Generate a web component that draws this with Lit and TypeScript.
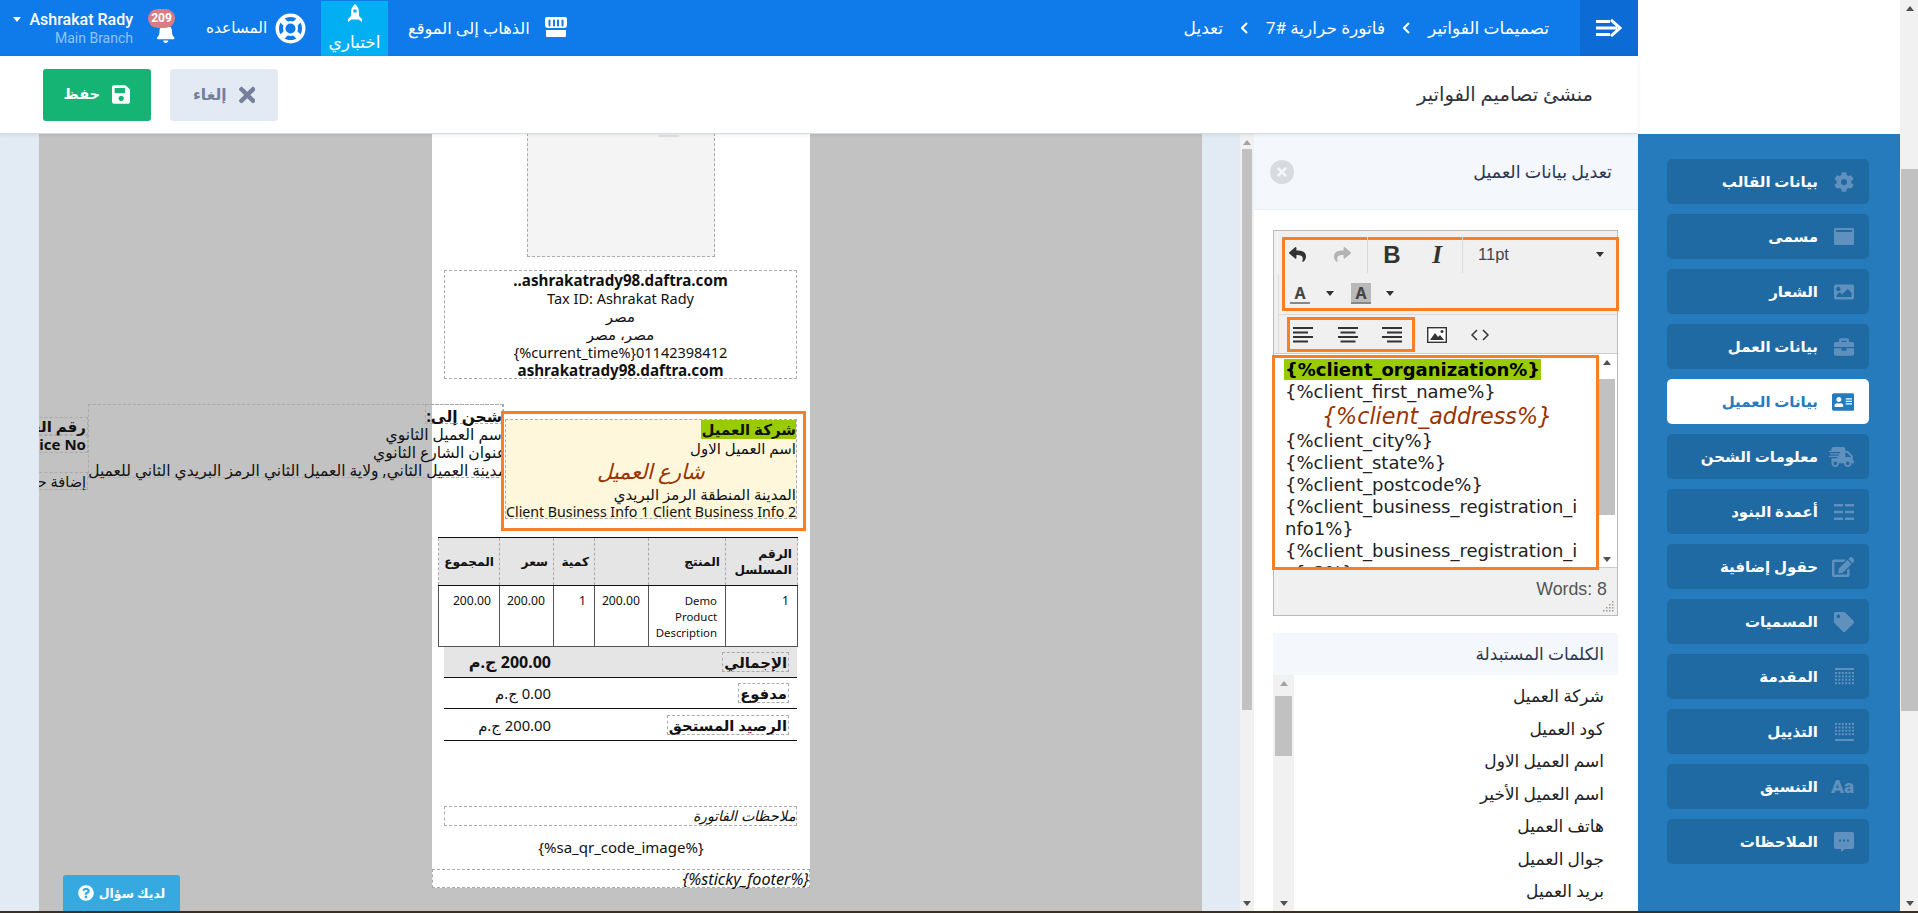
import { LitElement, css, html, svg } from 'lit';
import { customElement } from 'lit/decorators.js';

const FA = {
  cog: ['0 0 512 512', 'M487.4 315.7l-42.6-24.6c4.3-23.2 4.3-47 0-70.2l42.6-24.6c4.9-2.8 7.1-8.6 5.5-14-11.1-35.6-30-67.8-54.7-94.6-3.8-4.1-10-5.1-14.8-2.3L380.8 110c-17.9-15.4-38.5-27.3-60.8-35.1V25.8c0-5.6-3.9-10.5-9.4-11.7-36.7-8.2-74.3-7.8-109.2 0-5.5 1.2-9.4 6.1-9.4 11.7V75c-22.2 7.9-42.8 19.8-60.8 35.1L88.7 85.5c-4.9-2.8-11-1.9-14.8 2.3-24.7 26.7-43.6 58.9-54.7 94.6-1.7 5.4.6 11.2 5.5 14L67.3 221c-4.3 23.2-4.3 47 0 70.2l-42.6 24.6c-4.9 2.8-7.1 8.6-5.5 14 11.1 35.6 30 67.8 54.7 94.6 3.8 4.1 10 5.1 14.8 2.3l42.6-24.6c17.9 15.4 38.5 27.3 60.8 35.1v49.2c0 5.6 3.9 10.5 9.4 11.7 36.7 8.2 74.3 7.8 109.2 0 5.5-1.2 9.4-6.1 9.4-11.7v-49.2c22.2-7.9 42.8-19.8 60.8-35.1l42.6 24.6c4.9 2.8 11 1.9 14.8-2.3 24.7-26.7 43.6-58.9 54.7-94.6 1.5-5.5-.7-11.3-5.6-14.1zM256 336c-44.1 0-80-35.9-80-80s35.9-80 80-80 80 35.9 80 80-35.9 80-80 80z'],
  win: ['0 0 20 17', 'M1.5 0h17A1.5 1.5 0 0 1 20 1.500v14a1.500 1.500 0 0 1-1.500 1.500h-17A1.500 1.500 0 0 1 0 15.500v-14A1.500 1.500 0 0 1 1.500 0zM2 2v2h16V2z'],
  image: ['0 0 512 512', 'M464 448H48c-26.51 0-48-21.49-48-48V112c0-26.51 21.49-48 48-48h416c26.51 0 48 21.49 48 48v288c0 26.51-21.49 48-48 48zM112 120c-30.928 0-56 25.072-56 56s25.072 56 56 56 56-25.072 56-56-25.072-56-56-56zM64 384h384V272l-87.515-87.515c-4.686-4.686-12.284-4.686-16.971 0L208 320l-55.515-55.515c-4.686-4.686-12.284-4.686-16.971 0L64 336v48z'],
  case: ['0 0 512 512', 'M320 336c0 8.84-7.16 16-16 16h-96c-8.84 0-16-7.16-16-16v-48H0v144c0 25.6 22.4 48 48 48h416c25.6 0 48-22.4 48-48V288H320v48zm144-208h-80V80c0-25.6-22.4-48-48-48H176c-25.6 0-48 22.4-48 48v48H48c-25.6 0-48 22.4-48 48v80h512v-80c0-25.6-22.4-48-48-48zm-144 0H192V96h128v32z'],
  card: ['0 0 576 512', 'M528 32H48C21.5 32 0 53.5 0 80v352c0 26.5 21.5 48 48 48h480c26.5 0 48-21.5 48-48V80c0-26.5-21.5-48-48-48zm-352 96c35.3 0 64 28.7 64 64s-28.7 64-64 64-64-28.7-64-64 28.7-64 64-64zm112 236.8c0 10.6-10 19.2-22.4 19.2H86.4C74 384 64 375.4 64 364.8v-19.2c0-31.8 30.1-57.6 67.2-57.6h5c12.3 5.1 25.7 8 39.8 8s27.6-2.9 39.8-8h5c37.1 0 67.2 25.8 67.2 57.6v19.2zM512 312c0 4.4-3.6 8-8 8H360c-4.4 0-8-3.6-8-8v-16c0-4.4 3.6-8 8-8h144c4.4 0 8 3.6 8 8v16zm0-64c0 4.4-3.6 8-8 8H360c-4.400 0-8-3.600-8-8v-16c0-4.400 3.600-8 8-8h144c4.400 0 8 3.600 8 8v16zm0-64c0 4.400-3.600 8-8 8H360c-4.400 0-8-3.600-8-8v-16c0-4.400 3.600-8 8-8h144c4.400 0 8 3.600 8 8v16z'],
  truck: ['0 0 640 512', 'M624 352h-16V243.900c0-12.700-5.100-24.900-14.100-33.900L494 110.100c-9-9-21.200-14.100-33.900-14.100H416V48c0-26.500-21.500-48-48-48H112C85.500 0 64 21.500 64 48v48H8c-4.400 0-8 3.600-8 8v16c0 4.400 3.600 8 8 8h272c4.400 0 8 3.600 8 8v16c0 4.400-3.600 8-8 8H40c-4.400 0-8 3.600-8 8v16c0 4.400 3.600 8 8 8h208c4.400 0 8 3.600 8 8v16c0 4.400-3.600 8-8 8H8c-4.400 0-8 3.600-8 8v16c0 4.400 3.600 8 8 8h208c4.400 0 8 3.600 8 8v16c0 4.400-3.600 8-8 8H64v128c0 53 43 96 96 96s96-43 96-96h128c0 53 43 96 96 96s96-43 96-96h48c8.800 0 16-7.200 16-16v-32c0-8.800-7.200-16-16-16zM160 464c-26.500 0-48-21.500-48-48s21.500-48 48-48 48 21.500 48 48-21.500 48-48 48zm320 0c-26.500 0-48-21.500-48-48s21.500-48 48-48 48 21.500 48 48-21.500 48-48 48zm80-208H416V144h44.100l99.900 99.900V256z'],
  cols: ['0 0 20 16', 'M0 0h9v2.500H0zM11 0h9v2.500h-9zM0 6.700h9v2.500H0zM11 6.700h9v2.500h-9zM0 13.500h9V16H0zM11 13.500h9V16h-9z'],
  edit: ['0 0 576 512', 'M402.600 83.200l90.200 90.200c3.800 3.800 3.800 10 0 13.800L274.400 405.600l-92.800 10.300c-12.400 1.400-22.900-9.100-21.500-21.500l10.300-92.800L388.800 83.200c3.800-3.800 10-3.800 13.800 0zm162-22.900l-48.800-48.800c-15.200-15.200-39.900-15.200-55.200 0l-35.400 35.400c-3.800 3.800-3.800 10 0 13.800l90.200 90.200c3.800 3.800 10 3.800 13.800 0l35.400-35.400c15.200-15.300 15.200-40 0-55.200zM384 346.200V448H64V128h229.800c3.200 0 6.200-1.300 8.500-3.500l40-40c7.600-7.600 2.200-20.500-8.500-20.500H48C21.500 64 0 85.500 0 112v352c0 26.500 21.500 48 48 48h352c26.500 0 48-21.500 48-48V306.200c0-10.700-12.900-16-20.500-8.500l-40 40c-2.200 2.300-3.500 5.300-3.500 8.500z'],
  tag: ['0 0 512 512', 'M0 252.118V48C0 21.490 21.490 0 48 0h204.118a48 48 0 0 1 33.941 14.059l211.882 211.882c18.745 18.745 18.745 49.137 0 67.882L293.823 497.941c-18.745 18.745-49.137 18.745-67.882 0L14.059 286.059A48 48 0 0 1 0 252.118zM112 64c-26.510 0-48 21.490-48 48s21.490 48 48 48 48-21.490 48-48-21.490-48-48-48z'],
  comment: ['0 0 20 20', 'M2 0h16a2 2 0 0 1 2 2v13a2 2 0 0 1-2 2h-7l-4 3v-3H2a2 2 0 0 1-2-2V2a2 2 0 0 1 2-2zM5 7.500v2h2v-2zM9 7.500v2h2v-2zM13 7.500v2h2v-2z'],
  save: ['0 0 448 512', 'M433.941 129.941l-83.882-83.882A48 48 0 0 0 316.118 32H48C21.490 32 0 53.490 0 80v352c0 26.510 21.490 48 48 48h352c26.510 0 48-21.490 48-48V163.882a48 48 0 0 0-14.059-33.941zM224 416c-35.346 0-64-28.654-64-64 0-35.346 28.654-64 64-64s64 28.654 64 64c0 35.346-28.654 64-64 64zm96-304.520V212c0 6.627-5.373 12-12 12H76c-6.627 0-12-5.373-12-12V108c0-6.627 5.373-12 12-12h228.520c3.183 0 6.235 1.264 8.485 3.515l3.480 3.480A11.996 11.996 0 0 1 320 111.480z'],
  times: ['0 0 352 512', 'M242.720 256l100.070-100.070c12.280-12.280 12.280-32.190 0-44.480l-22.240-22.240c-12.280-12.280-32.190-12.280-44.480 0L176 189.280 75.930 89.210c-12.280-12.280-32.190-12.280-44.480 0L9.210 111.450c-12.280 12.280-12.280 32.190 0 44.480L109.280 256 9.210 356.070c-12.280 12.280-12.280 32.190 0 44.480l22.240 22.240c12.280 12.280 32.200 12.280 44.480 0L176 322.720l100.070 100.070c12.280 12.280 32.200 12.280 44.480 0l22.240-22.240c12.280-12.280 12.280-32.190 0-44.480L242.720 256z'],
  bell: ['0 0 448 512', 'M224 512c35.320 0 63.970-28.650 63.970-64H160.030c0 35.350 28.650 64 63.970 64zm215.390-149.710c-19.320-20.760-55.470-51.990-55.470-154.290 0-77.700-54.480-139.900-127.940-155.160V32c0-17.670-14.320-32-31.980-32s-31.980 14.330-31.980 32v20.840C118.560 68.100 64.080 130.300 64.080 208c0 102.300-36.150 133.530-55.470 154.290-6 6.450-8.660 14.160-8.610 21.710.11 16.400 12.980 32 32.100 32h383.800c19.120 0 32-15.600 32.100-32 .05-7.550-2.610-15.270-8.610-21.710z'],
  help: ['0 0 512 512', 'M504 256c0 136.997-111.043 248-248 248S8 392.997 8 256C8 119.083 119.043 8 256 8s248 111.083 248 248zM262.655 90c-54.497 0-89.255 22.957-116.549 63.758-3.536 5.286-2.353 12.415 2.715 16.258l34.699 26.310c5.205 3.947 12.621 3.008 16.665-2.122 17.864-22.658 30.113-35.797 57.303-35.797 20.429 0 45.698 13.148 45.698 32.958 0 14.976-12.363 22.667-32.534 33.976C247.128 238.528 216 254.941 216 296v4c0 6.627 5.373 12 12 12h56c6.627 0 12-5.373 12-12v-1.333c0-28.462 83.186-29.647 83.186-106.667 0-58.002-60.165-102-116.531-102zM256 338c-25.365 0-46 20.635-46 46 0 25.364 20.635 46 46 46s46-20.636 46-46c0-25.365-20.635-46-46-46z'],
  undo: ['0 0 512 512', 'M8.309 189.836L184.313 37.851C199.719 24.546 224 35.347 224 56.015v80.053c160.629 1.839 288 34.032 288 186.258 0 61.441-39.581 122.309-83.333 154.132-13.653 9.931-33.111-2.533-28.077-18.631 45.344-145.012-21.507-183.510-176.590-185.742V360c0 20.700-24.300 31.453-39.687 18.164l-176.004-152c-11.071-9.562-11.086-26.753 0-36.328z'],
  rocket: ['0 0 14 19', 'M7 0c2.600 2 4 5 4 8.500V12l3 3v3l-3.500-2.500h-7L0 18v-3l3-3V8.500C3 5 4.400 2 7 0zm0 5.200a1.800 1.800 0 1 0 0 3.600 1.800 1.800 0 0 0 0-3.600z'],
} as const;

type IconName = keyof typeof FA;

const icon = (name: IconName, h: number, cls = '') =>
  html`<svg class=${cls} height=${h} viewBox=${FA[name][0]} fill="currentColor"><path fill-rule="evenodd" d=${FA[name][1]}></path></svg>`;

// dotted grid used by the header / footer entries of the side menu
const dotGrid = (solidTop: boolean) => {
  const dots = [];
  for (let r = 0; r < 4; r++) {
    for (let c = 0; c < 6; c++) {
      dots.push(svg`<rect x=${c * 3.4} y=${(solidTop ? 4 : 0) + r * 3.400} width="2" height="2"></rect>`);
    }
  }
  return html`<svg height="18" viewBox="0 0 19 18" fill="currentColor">
    ${dots}<rect x="0" y=${solidTop ? 0 : 16} width="19" height="2"></rect>
  </svg>`;
};

const MENU: { label: string; ico: () => unknown; active?: boolean }[] = [
  { label: 'بيانات القالب', ico: () => icon('cog', 20) },
  { label: 'مسمى', ico: () => icon('win', 17) },
  { label: 'الشعار', ico: () => icon('image', 20) },
  { label: 'بيانات العمل', ico: () => icon('case', 20) },
  { label: 'بيانات العميل', ico: () => icon('card', 20), active: true },
  { label: 'معلومات الشحن', ico: () => icon('truck', 20) },
  { label: 'أعمدة البنود', ico: () => icon('cols', 16) },
  { label: 'حقول إضافية', ico: () => icon('edit', 20) },
  { label: 'المسميات', ico: () => icon('tag', 20) },
  { label: 'المقدمة', ico: () => dotGrid(true) },
  { label: 'التذييل', ico: () => dotGrid(false) },
  { label: 'التنسيق', ico: () => html`<span class="aa">Aa</span>` },
  { label: 'الملاحظات', ico: () => icon('comment', 20) },
];

const VARS = ['شركة العميل', 'كود العميل', 'اسم العميل الاول', 'اسم العميل الأخير', 'هاتف العميل', 'جوال العميل', 'بريد العميل', 'مدينة العميل'];

const scrollbar = (cls: string, top: number, thumb: number) => html`
  <div class="sb ${cls}">
    <i class="arr up"></i>
    <div style="height:${top}px"></div>
    <div class="thumb" style="height:${thumb}px"></div>
    <div class="grow"></div>
    <i class="arr down"></i>
  </div>
`;

const alignIcon = (kind: 'l' | 'c' | 'r') => {
  const x = kind === 'l' ? 0 : kind === 'c' ? 2.5 : 5;
  return html`<svg width="20" height="18" viewBox="0 0 20 18" fill="#333">
    <rect y="1" width="20" height="2"></rect>
    <rect x=${x} y="5.500" width="15" height="2"></rect>
    <rect y="10" width="20" height="2"></rect>
    <rect x=${x} y="14.500" width="15" height="2"></rect>
  </svg>`;
};

@customElement('app-root')
export class AppRoot extends LitElement {
  static styles = css`
    :host {
      display: grid;
      grid-template-columns: 1638px 262px 18px;
      width: 1918px;
      height: 913px;
      box-sizing: border-box;
      border-bottom: 2px solid #3a2f25;
      overflow: hidden;
      font-family: 'Roboto', 'Noto Sans', 'DejaVu Sans', sans-serif;
      background: #fff;
      color: #333;
    }
    * {
      box-sizing: border-box;
    }
    .main {
      display: flex;
      flex-direction: column;
      min-width: 0;
      height: 911px;
    }

    /* top bar */
    .topbar {
      height: 56px;
      flex: none;
      display: flex;
      align-items: stretch;
      background: #0f7aea;
      color: #fff;
      box-shadow: 0 0 18px rgba(0, 0, 0, 0.05);
    }
    .user {
      width: 120px;
      margin-left: 13px;
      display: flex;
      flex-direction: column;
      align-items: flex-end;
      position: relative;
      padding-top: 10px;
      white-space: nowrap;
    }
    .user b {
      font-size: 16px;
      font-weight: 500;
      line-height: 19px;
    }
    .user small {
      font-size: 14px;
      line-height: 19px;
      color: #93c3f8;
    }
    .user::before {
      content: '';
      position: absolute;
      left: 0;
      top: 17px;
      border: 4.5px solid transparent;
      border-top: 5px solid #fff;
    }
    .bell {
      position: relative;
      margin-left: 24px;
      margin-top: 23px;
      width: 23px;
      height: 20px;
    }
    .badge {
      position: absolute;
      left: -9px;
      top: -14px;
      width: 27px;
      height: 19px;
      border-radius: 10px;
      background: #d97c83;
      font-size: 12px;
      font-weight: 700;
      text-align: center;
      line-height: 19px;
    }
    .help {
      margin-left: 26px;
      display: flex;
      align-items: center;
      gap: 8px;
      width: 101px;
      font-size: 15.300px;
      white-space: nowrap;
    }
    .ring {
      flex: none;
    }
    .tab {
      margin-left: 14px;
      margin-top: 1px;
      width: 67px;
      background: #02aff2;
      display: flex;
      flex-direction: column;
      align-items: center;
      padding-top: 3px;
      font-size: 17px;
      white-space: nowrap;
    }
    .tab span {
      margin-top: 7px;
      line-height: 24px;
    }
    .site {
      margin-left: 20px;
      display: flex;
      align-items: center;
      gap: 15px;
      width: 159px;
      font-size: 16.300px;
      white-space: nowrap;
    }
    .site svg {
      margin-top: -2px;
      flex: none;
    }
    .crumbs {
      margin-left: auto;
      margin-right: 31px;
      display: flex;
      align-items: center;
      gap: 18px;
      font-size: 17px;
      white-space: nowrap;
    }
    .toggle {
      width: 58px;
      background: #0d6bd5;
      display: flex;
      align-items: center;
      justify-content: center;
    }

    /* title row */
    .titlebar {
      height: 78px;
      flex: none;
      display: flex;
      align-items: center;
      padding: 0 45px 0 43px;
      gap: 19px;
      background: #fff;
      border-bottom: 1px solid #d3dae2;
      box-shadow: 0 1px 4px rgba(0, 0, 0, 0.08);
      position: relative;
      z-index: 5;
    }
    .btn {
      width: 108px;
      height: 52px;
      border-radius: 3px;
      display: flex;
      align-items: center;
      justify-content: center;
      gap: 12px;
      font-size: 14.500px;
      font-weight: 700;
    }
    .btn.save {
      background: #15b374;
      color: #fff;
    }
    .btn.cancel {
      background: #e4eaf3;
      color: #75809a;
      font-size: 15.500px;
    }
    .titlebar h1 {
      margin: 0 0 0 auto;
      font-size: 19.500px;
      font-weight: 400;
      color: #2f3440;
    }

    /* workspace */
    .work {
      flex: 1;
      min-height: 0;
      display: grid;
      grid-template-columns: 39px 1163px 38px 14px 384px;
    }
    .gutter {
      background: #e2eaf3;
    }
    .canvas {
      background: #c2c2c2;
      position: relative;
      overflow: hidden;
      padding-left: 393px;
    }
    .ask {
      position: absolute;
      left: 24px;
      bottom: 0;
      width: 117px;
      height: 36px;
      background: #36a9e1;
      border-radius: 3px 3px 0 0;
      color: #fff;
      font-size: 12.500px;
      font-weight: 700;
      display: flex;
      align-items: center;
      justify-content: center;
      gap: 5px;
    }

    /* invoice sheet */
    .paper {
      width: 378px;
      height: 754px;
      background: #fff;
      display: flex;
      flex-direction: column;
      align-items: stretch;
      font-family: 'Noto Sans', 'DejaVu Sans', sans-serif;
      font-size: 15px;
      line-height: 18px;
      color: #111;
    }
    .dash {
      border: 1px dashed #aaa;
    }
    .logo {
      width: 188px;
      height: 124px;
      margin-top: -1px;
      flex: none;
      align-self: center;
      background: #f4f4f4;
      position: relative;
    }
    .logo::after {
      content: '';
      position: absolute;
      right: 35px;
      top: 1px;
      width: 20px;
      height: 2px;
      background: #e2e2e2;
    }
    .biz {
      margin: 13px 13px 0 12px;
      height: 109px;
      text-align: center;
      flex: none;
    }
    .biz div {
      height: 18px;
      white-space: nowrap;
    }
    .biz .lat {
      font-size: 14.500px;
    }
    .biz b {
      font-size: 15.200px;
    }
    .parties {
      position: relative;
      margin-top: 32px;
      height: 120px;
      flex: none;
    }
    .client-mark {
      position: absolute;
      z-index: 2;
      right: 4px;
      top: 0;
      width: 305px;
      height: 120px;
      background: #fff;
      border: 3px solid #f97f27;
      padding: 5px 6px 9px 1px;
    }
    .client {
      height: 100%;
      background: #fef7dc;
      text-align: right;
      direction: rtl;
      overflow: hidden;
      white-space: nowrap;
    }
    .client .org {
      display: inline-block;
      background: #99cc00;
      font-weight: 700;
      height: 19px;
      font-size: 15px;
    }
    .client .addr {
      text-align: center;
      color: #993300;
      font-style: italic;
      font-size: 21px;
      line-height: 28px;
    }
    .client .ln {
      line-height: 18px;
    }
    .client .ln.lat {
      font-size: 14.200px;
      text-align: right;
    }
    .ship {
      position: absolute;
      left: -344px;
      top: -7px;
      width: 416px;
      height: 74px;
      direction: rtl;
      white-space: nowrap;
      padding-top: 2px;
      font-size: 15.500px;
    }
    .ship div {
      margin-right: -3px;
    }
    .ship .lbl {
      position: absolute;
      right: 0;
      top: -1px;
      width: 78px;
      height: 20px;
      margin: 0;
      padding: 2px 0 0 0;
      font-weight: 700;
      border: 1px dashed #aaa;
    }
    .ship .first {
      height: 18px;
    }
    .invno {
      position: absolute;
      right: 722px;
      top: 6px;
      width: 130px;
      direction: rtl;
      font-weight: 700;
      white-space: nowrap;
      font-size: 15px;
    }
    .invno div {
      height: 18px;
      border: 1px dashed #aaa;
      border-left: 0;
      line-height: 16px;
      padding-right: 1px;
    }
    .invno .en {
      direction: ltr;
      text-align: right;
    }
    .invno .add {
      margin-top: 19px;
      font-weight: 400;
      font-size: 14.500px;
    }
    table {
      margin: 6px 13px 0 6px;
      width: 359px;
      flex: none;
      direction: rtl;
      border-collapse: collapse;
      table-layout: fixed;
      font-size: 12.200px;
      line-height: 16px;
    }
    th {
      height: 48px;
      background: #e5e5e5;
      border-top: 1px solid #111;
      border-bottom: 1px solid #111;
      border-left: 1px dashed #aaa;
      border-right: 1px dashed #aaa;
      text-align: right;
      padding: 0 5px;
      font-size: 12.200px;
    }
    td {
      height: 61px;
      vertical-align: top;
      text-align: right;
      border: 1px solid #555;
      border-top: 0;
      padding: 7px 8px 0;
    }
    td.desc {
      font-size: 11.400px;
    }
    .totals {
      margin: 0 13px 0 12px;
      direction: rtl;
      flex: none;
    }
    .row {
      height: 31px;
      display: grid;
      grid-template-columns: 1fr 107px;
      align-items: center;
      padding-right: 8px;
      border-bottom: 1px solid #111;
      font-size: 14.800px;
    }
    .row.last {
      height: 32px;
    }
    .row.sum {
      background: #e5e5e5;
    }
    .row.sum .val {
      font-weight: 700;
      font-size: 16px;
    }
    .row .val {
      font-size: 14.800px;
    }
    .row .lab {
      justify-self: start;
      font-weight: 700;
      line-height: 18px;
      height: 20px;
      padding: 0 1px;
      border: 1px dashed #aaa;
    }
    .notes {
      margin: 65px 13px 0 12px;
      height: 20px;
      flex: none;
      direction: rtl;
      font-style: italic;
      font-size: 14.300px;
    }
    .qr {
      margin-top: 12px;
      height: 20px;
      flex: none;
      text-align: center;
    }
    .sticky {
      margin-top: 11px;
      height: 19px;
      flex: none;
      font-style: italic;
      text-align: right;
      font-size: 16.200px;
      white-space: nowrap;
    }

    /* fake scrollbars */
    .sb {
      display: flex;
      flex-direction: column;
      background: #f1f1f1;
      align-items: center;
    }
    .sb .thumb {
      background: #c1c1c1;
      width: 100%;
    }
    .sb .grow {
      flex: 1;
    }
    .arr {
      display: block;
      flex: none;
      width: 0;
      height: 0;
      border: 4px solid transparent;
    }
    .arr.up {
      border-top: 0;
      border-bottom: 5px solid #a3a3a3;
      margin: 6px 0 4px;
    }
    .arr.down {
      border-bottom: 0;
      border-top: 5px solid #505050;
      margin: 4px 0 5px;
    }
    .sb.panel {
      padding: 0 2px;
    }
    .sb.page .arr.up {
      border-bottom-color: #505050;
    }
    .sb.page {
      padding-left: 1px;
    }
    .sb.inner {
      width: 16px;
      background: #fff;
    }
    .sb.inner .arr.up {
      border-bottom-color: #505050;
    }
    .sb.vs {
      width: 21px;
      flex: none;
      padding: 0 2px;
    }

    /* settings panel */
    .panel-body {
      display: flex;
      flex-direction: column;
      min-height: 0;
      overflow: hidden;
      background: #fff;
    }
    .phead {
      height: 76px;
      flex: none;
      background: #f4f7fb;
      border-bottom: 1px solid #e3ebf3;
      display: flex;
      align-items: center;
      padding: 0 26px 0 16px;
      justify-content: space-between;
      font-size: 17.500px;
      color: #2c3550;
    }
    .close {
      width: 24px;
      height: 24px;
      border-radius: 50%;
      background: #d9dcdf;
      color: #f4f7fb;
      display: flex;
      align-items: center;
      justify-content: center;
    }
    .editor {
      margin: 20px 20px 0 19px;
      height: 386px;
      flex: none;
      border: 1px solid #bbb;
      background: #f0f0f0;
      display: flex;
      flex-direction: column;
      position: relative;
    }
    .toolbar {
      height: 123px;
      flex: none;
      padding-top: 6px;
      border-bottom: 1px solid #ccc;
      position: relative;
    }
    .vline {
      position: absolute;
      left: 4px;
      top: 44px;
      width: 1px;
      height: 40px;
      background: #dcdcdc;
    }
    .mark1 {
      position: relative;
      z-index: 1;
      margin-left: 8px;
      width: 337px;
      height: 74px;
      border: 3px solid #f97f27;
    }
    .tr {
      display: flex;
      align-items: center;
      color: #333;
    }
    .tr.a {
      height: 29px;
    }
    .tr.b {
      height: 39px;
      padding: 9px 0 0 5px;
    }
    .tb {
      width: 24px;
      display: flex;
      justify-content: center;
      flex: none;
    }
    .tb.off {
      color: #b4b4b4;
    }
    .tb.gap {
      margin-left: 21px;
    }
    .tb svg.flip {
      transform: scaleX(-1);
    }
    .sep {
      width: 1px;
      height: 36px;
      background: #d9d9d9;
      margin: 0 12px 0 13px;
      flex: none;
    }
    .bold {
      font: 700 24px/24px 'Liberation Sans', sans-serif;
    }
    .ital {
      font: italic 700 25px/24px 'Liberation Serif', serif;
    }
    .size {
      font: 16.500px 'Liberation Sans', sans-serif;
      margin-left: 3px;
      flex: 1;
      color: #444;
    }
    .caret {
      width: 0;
      height: 0;
      border: 4.500px solid transparent;
      border-bottom: 0;
      border-top: 5px solid #333;
      flex: none;
    }
    .size + .caret {
      margin-right: 12px;
    }
    .c1 {
      margin-left: 16px;
    }
    .c2 {
      margin-left: 15px;
    }
    .fa {
      width: 20px;
      height: 21px;
      text-align: center;
      font: 700 16px/20px 'Noto Sans', sans-serif;
      border-bottom: 2px solid #888;
      flex: none;
      color: #444;
    }
    .fa.bg {
      background: #b9b9b9;
      margin-left: 17px;
    }
    .row3 {
      margin: 3px 0 0 4px;
      height: 40px;
      border-top: 1px solid #d9d9d9;
      border-left: 1px solid #d9d9d9;
      display: flex;
      align-items: flex-start;
      padding-top: 2px;
    }
    .mark2 {
      margin-left: 8px;
      width: 128px;
      height: 35px;
      border: 3px solid #f97f27;
      display: flex;
      align-items: center;
      gap: 24.500px;
      padding-left: 3px;
    }
    .row3 .ex {
      height: 35px;
      display: flex;
      align-items: center;
      margin-left: 12px;
    }
    .row3 .ex + .ex {
      margin-left: 24px;
    }
    .content {
      height: 213px;
      flex: none;
      display: flex;
      background: #fff;
    }
    .mark3 {
      position: relative;
      z-index: 2;
      width: 327px;
      height: 215px;
      margin: 1px 0 -3px -2px;
      border: 3px solid #f97f27;
      padding: 1px 17px 0 10px;
      overflow: hidden;
      font: 18px/22px 'DejaVu Sans', sans-serif;
      color: #222;
      word-break: break-all;
      flex: none;
    }
    .mark3 .org {
      display: block;
      width: fit-content;
      background: #99cc00;
      font-weight: 700;
      margin-left: -1px;
      padding: 0 1px;
      height: 21px;
      margin-bottom: 1px;
      color: #000;
      white-space: nowrap;
      font-size: 18px;
    }
    .mark3 .addr {
      display: block;
      color: #993300;
      font-style: italic;
      font-size: 22.200px;
      line-height: 27px;
      padding-left: 37px;
      white-space: nowrap;
    }
    .mark3 p {
      margin: 0;
    }
    .status {
      flex: 1;
      border-top: 1px solid #ccc;
      font: 17.800px/20px 'Liberation Sans', sans-serif;
      color: #555;
      text-align: right;
      padding: 11px 10px 0 0;
      position: relative;
    }
    .grip {
      position: absolute;
      right: 3px;
      bottom: 2px;
    }
    .vars {
      margin: 17px 20px 0 19px;
      flex: 1;
      min-height: 0;
      display: flex;
      flex-direction: column;
    }
    .vhead {
      height: 42px;
      flex: none;
      background: #f4f7fb;
      border-radius: 3px 3px 0 0;
      display: flex;
      align-items: center;
      justify-content: flex-end;
      padding-right: 14px;
      font-size: 17px;
      color: #2c3550;
    }
    .vbody {
      flex: 1;
      min-height: 0;
      display: flex;
    }
    .vlist {
      flex: 1;
      padding: 5px 14px 0 0;
      direction: rtl;
      overflow: hidden;
      font-size: 17px;
      line-height: 32.500px;
      color: #222;
    }

    /* side menu */
    .side {
      height: 911px;
      display: flex;
      flex-direction: column;
    }
    .side-top {
      height: 134px;
      flex: none;
      background: #fff;
    }
    .menu {
      flex: 1;
      background: #267bbd;
      padding: 25px 0 0 29px;
      display: flex;
      flex-direction: column;
      gap: 10px;
      direction: rtl;
      align-items: flex-end;
    }
    .item {
      width: 202px;
      height: 45px;
      flex: none;
      border-radius: 5px;
      background: #206aa3;
      color: #fff;
      display: flex;
      align-items: center;
      padding-right: 15px;
      gap: 16px;
      font-size: 15px;
      font-weight: 700;
    }
    .item.on {
      background: #fff;
      color: #267bbd;
    }
    .item .ico {
      width: 20px;
      flex: none;
      display: flex;
      justify-content: flex-start;
      color: #6091be;
    }
    .item.on .ico {
      color: #267bbd;
    }
    .ico svg {
      flex: none;
    }
    .aa {
      font: 900 19px/20px 'Roboto', sans-serif;
      white-space: nowrap;
      direction: ltr;
    }
  `;

  render() {
    return html`
      <div class="main">
        ${this.renderTopbar()}
        <div class="titlebar">
          <div class="btn save" dir="rtl">${icon('save', 21)}<span>حفظ</span></div>
          <div class="btn cancel" dir="rtl">${icon('times', 24)}<span>إلغاء</span></div>
          <h1 dir="rtl">منشئ تصاميم الفواتير</h1>
        </div>
        <div class="work">
          <div class="gutter"></div>
          <div class="canvas">
            ${this.renderPaper()}
            <div class="ask" dir="rtl"><span>لديك سؤال</span>${icon('help', 16)}</div>
          </div>
          <div class="gutter"></div>
          ${scrollbar('panel', 0, 561)}
          ${this.renderPanel()}
        </div>
      </div>
      <div class="side">
        <div class="side-top"></div>
        <nav class="menu">
          ${MENU.map(
            m => html`<div class="item ${m.active ? 'on' : ''}">
              <span class="ico">${m.ico()}</span><span>${m.label}</span>
            </div>`
          )}
        </nav>
      </div>
      ${scrollbar('page', 154, 542)}
    `;
  }

  renderTopbar() {
    return html`
      <header class="topbar">
        <div class="user"><b>Ashrakat Rady</b><small>Main Branch</small></div>
        <div class="bell">${icon('bell', 20)}<span class="badge">209</span></div>
        <div class="help">
          <span dir="rtl">المساعده</span>
          <svg class="ring" width="31" height="31" viewBox="0 0 31 31">
            <circle cx="15.500" cy="15.500" r="15" fill="#fff"></circle>
            <circle cx="15.500" cy="15.500" r="9.500" fill="none" stroke="#0f7aea" stroke-width="4"></circle>
            <path d="M7 7l5 5M24 7l-5 5M7 24l5-5M24 24l-5-5" stroke="#fff" stroke-width="6"></path>
            <circle cx="15.500" cy="15.500" r="5" fill="#0f7aea"></circle>
          </svg>
        </div>
        <div class="tab">${icon('rocket', 19)}<span dir="rtl">اختباري</span></div>
        <div class="site">
          <span dir="rtl">الذهاب إلى الموقع</span>
          <svg width="22" height="20" viewBox="0 0 22 20">
            <path d="M2 0h18a2 2 0 0 1 2 2v6a3 3 0 0 1-3 3H3a3 3 0 0 1-3-3V2a2 2 0 0 1 2-2z" fill="#fff"></path>
            <path d="M4.500 3.500v5M9 3.500v5M13 3.500v5M17.500 3.500v5" stroke="#0f7aea" stroke-width="2" stroke-linecap="round"></path>
            <path d="M1 13h20v5.500a1.500 1.500 0 0 1-1.500 1.500h-17A1.500 1.500 0 0 1 1 18.500z" fill="#fff"></path>
          </svg>
        </div>
        <div class="crumbs" dir="rtl">
          <span>تصميمات الفواتير</span>${this.chevron()}
          <span>فاتورة حرارية #7</span>${this.chevron()}
          <span>تعديل</span>
        </div>
        <div class="toggle">
          <svg width="26" height="18" viewBox="0 0 26 18" fill="none" stroke="#fff" stroke-width="3">
            <path d="M0 2.500h14M0 9h21M0 15.500h14M15 1l9 8-9 8"></path>
          </svg>
        </div>
      </header>
    `;
  }

  chevron() {
    return html`<svg width="7" height="12" viewBox="0 0 7 12" fill="none" stroke="#fff" stroke-width="2">
      <path d="M6 1L1 6l5 5"></path>
    </svg>`;
  }

  renderPaper() {
    return html`
      <div class="paper">
        <div class="logo dash"></div>
        <div class="biz dash">
          <div><b>..ashrakatrady98.daftra.com</b></div>
          <div class="lat">Tax ID: Ashrakat Rady</div>
          <div>مصر</div>
          <div>مصر، مصر</div>
          <div class="lat">{%current_time%}01142398412</div>
          <div><b>ashrakatrady98.daftra.com</b></div>
        </div>
        <div class="parties">
          <div class="invno">
            <div>رقم الفاتورة</div>
            <div class="en">Invoice No</div>
            <div class="add">إضافة حقل</div>
          </div>
          <div class="ship dash">
            <div class="lbl">شحن إلى:</div>
            <div class="first"></div>
            <div>اسم العميل الثانوي</div>
            <div>عنوان الشارع الثانوي</div>
            <div>مدينة العميل الثاني, ولاية العميل الثاني الرمز البريدي الثاني للعميل</div>
          </div>
          <div class="client-mark">
            <div class="client dash">
              <div><span class="org">شركة العميل</span></div>
              <div class="ln">اسم العميل الاول</div>
              <div class="addr">شارع العميل</div>
              <div class="ln">المدينة المنطقة الرمز البريدي</div>
              <div class="ln lat" dir="ltr">Client Business Info 1 Client Business Info 2</div>
            </div>
          </div>
        </div>
        <table>
          <colgroup><col style="width:72px" /><col style="width:77px" /><col style="width:54px" /><col style="width:41px" /><col style="width:54px" /><col style="width:61px" /></colgroup>
          <tr>
            <th>الرقم<br />المسلسل</th>
            <th>المنتج</th>
            <th></th>
            <th>كمية</th>
            <th>سعر</th>
            <th>المجموع</th>
          </tr>
          <tr>
            <td>1</td>
            <td class="desc">Demo<br />Product<br />Description</td>
            <td>200.00</td>
            <td>1</td>
            <td>200.00</td>
            <td>200.00</td>
          </tr>
        </table>
        <div class="totals">
          <div class="row sum"><span class="lab">الإجمالي</span><span class="val">200.00 ج.م</span></div>
          <div class="row"><span class="lab">مدفوع</span><span class="val">0.00 ج.م</span></div>
          <div class="row last"><span class="lab">الرصيد المستحق</span><span class="val">200.00 ج.م</span></div>
        </div>
        <div class="notes dash">ملاحظات الفاتورة</div>
        <div class="qr">{%sa_qr_code_image%}</div>
        <div class="sticky dash">{%sticky_footer%}</div>
      </div>
    `;
  }

  renderPanel() {
    return html`
      <aside class="panel-body">
        <div class="phead">
          <span class="close">${icon('times', 14)}</span>
          <span dir="rtl">تعديل بيانات العميل</span>
        </div>
        <div class="editor">
          <div class="toolbar">
            <div class="vline"></div>
            <div class="mark1">
              <div class="tr a">
                <span class="tb">${icon('undo', 17)}</span>
                <span class="tb off gap">${icon('undo', 17, 'flip')}</span>
                <span class="sep"></span>
                <span class="tb bold">B</span>
                <span class="tb ital gap">I</span>
                <span class="sep"></span>
                <span class="size">11pt</span>
                <span class="caret"></span>
              </div>
              <div class="tr b">
                <span class="fa">A</span>
                <span class="caret c1"></span>
                <span class="fa bg">A</span>
                <span class="caret c2"></span>
              </div>
            </div>
            <div class="row3">
              <div class="mark2">${alignIcon('l')}${alignIcon('c')}${alignIcon('r')}</div>
              <div class="ex">
                <svg width="20" height="16" viewBox="0 0 20 16">
                  <rect x=".7" y=".7" width="18.600" height="14.600" fill="#fff" stroke="#333" stroke-width="1.400"></rect>
                  <path d="M3 13l5-7 3 4 2-2 4 5z" fill="#333"></path>
                  <circle cx="15" cy="4.500" r="1.500" fill="#333"></circle>
                </svg>
              </div>
              <div class="ex">
                <svg width="18" height="12" viewBox="0 0 18 12" fill="none" stroke="#333" stroke-width="1.500">
                  <path d="M6 1L1 6l5 5M12 1l5 5-5 5"></path>
                </svg>
              </div>
            </div>
          </div>
          <div class="content">
            <div class="mark3">
              <span class="org">{%client_organization%}</span>
              <p>{%client_first_name%}</p>
              <span class="addr">{%client_address%}</span>
              <p>{%client_city%}</p>
              <p>{%client_state%}</p>
              <p>{%client_postcode%}</p>
              <p>{%client_business_registration_info1%}</p>
              <p>{%client_business_registration_info2%}</p>
            </div>
            ${scrollbar('inner', 10, 136)}
          </div>
          <div class="status">
            Words: 8
            <svg class="grip" width="12" height="12" viewBox="0 0 12 12" fill="#999">
              <rect x="10" y="0" width="1.500" height="1.500"></rect>
              <rect x="7" y="3" width="1.500" height="1.500"></rect><rect x="10" y="3" width="1.500" height="1.500"></rect>
              <rect x="4" y="6" width="1.500" height="1.500"></rect><rect x="7" y="6" width="1.500" height="1.500"></rect><rect x="10" y="6" width="1.500" height="1.500"></rect>
              <rect x="1" y="9" width="1.500" height="1.500"></rect><rect x="4" y="9" width="1.500" height="1.500"></rect><rect x="7" y="9" width="1.500" height="1.500"></rect><rect x="10" y="9" width="1.500" height="1.500"></rect>
            </svg>
          </div>
        </div>
        <div class="vars">
          <div class="vhead"><span dir="rtl">الكلمات المستبدلة</span></div>
          <div class="vbody">
            ${scrollbar('vs', 6, 60)}
            <div class="vlist">${VARS.map(v => html`<div>${v}</div>`)}</div>
          </div>
        </div>
      </aside>
    `;
  }
}
